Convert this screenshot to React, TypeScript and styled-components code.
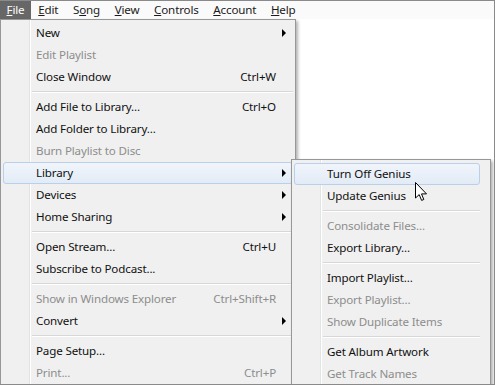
import React from 'react';
import styled, { createGlobalStyle, css } from 'styled-components';

type Entry =
  | { sep: true }
  | {
      sep?: false;
      label: string;
      shortcut?: string;
      arrow?: boolean;
      disabled?: boolean;
      active?: boolean;
      sub?: Entry[];
    };

const SEP: Entry = { sep: true };

const libraryMenu: Entry[] = [
  { label: 'Turn Off Genius', active: true },
  { label: 'Update Genius' },
  SEP,
  { label: 'Consolidate Files...', disabled: true },
  { label: 'Export Library...' },
  SEP,
  { label: 'Import Playlist...' },
  { label: 'Export Playlist...', disabled: true },
  { label: 'Show Duplicate Items', disabled: true },
  SEP,
  { label: 'Get Album Artwork' },
  { label: 'Get Track Names', disabled: true },
];

const fileMenu: Entry[] = [
  { label: 'New', arrow: true },
  { label: 'Edit Playlist', disabled: true },
  { label: 'Close Window', shortcut: 'Ctrl+W' },
  SEP,
  { label: 'Add File to Library...', shortcut: 'Ctrl+O' },
  { label: 'Add Folder to Library...' },
  { label: 'Burn Playlist to Disc', disabled: true },
  { label: 'Library', arrow: true, active: true, sub: libraryMenu },
  { label: 'Devices', arrow: true },
  { label: 'Home Sharing', arrow: true },
  SEP,
  { label: 'Open Stream...', shortcut: 'Ctrl+U' },
  { label: 'Subscribe to Podcast...' },
  SEP,
  { label: 'Show in Windows Explorer', shortcut: 'Ctrl+Shift+R', disabled: true },
  { label: 'Convert', arrow: true },
  SEP,
  { label: 'Page Setup...' },
  { label: 'Print...', shortcut: 'Ctrl+P', disabled: true },
];

// menubar titles, index of the underlined letter
const titles: [string, number][] = [
  ['File', 0],
  ['Edit', 0],
  ['Song', 1],
  ['View', 0],
  ['Controls', 0],
  ['Account', 0],
  ['Help', 0],
];

const GlobalStyle = createGlobalStyle`
  html, body {
    margin: 0;
    padding: 0;
    background: #fff;
  }
  body {
    font-family: "Segoe UI", "Noto Sans", "Open Sans", sans-serif;
    font-size: 11.6px;
    letter-spacing: -0.15px;
    color: #111;
  }
`;

const Frame = styled.div`
  position: relative;
  width: 495px;
  height: 385px;
  box-sizing: border-box;
  border: 1px solid #8a8a8a;
  border-left: 0;
  background: #fff;
  overflow: hidden;
`;

const MenuBar = styled.div`
  display: flex;
  height: 18px;
  align-items: stretch;
  background: #fafafa;
`;

const BarItem = styled.div<{ $open?: boolean }>`
  position: relative;
  display: flex;
  align-items: center;
  padding: 0 7.3px;
  line-height: 18px;
  color: #1a1a1a;
  ${(p) =>
    p.$open &&
    css`
      padding: 0 6.5px;
      background: #676767;
      color: #fff;
    `}
`;

const Menu = styled.div<{ $sub?: boolean }>`
  position: absolute;
  z-index: 2;
  box-sizing: border-box;
  border: 1px solid #979797;
  background-color: #f0f0f0;
  background-image: linear-gradient(
    to right,
    transparent 28px,
    #e2e3e3 28px,
    #e2e3e3 29px,
    #ffffff 29px,
    #ffffff 30px,
    transparent 30px
  );
  box-shadow: 2px 2px 3px rgba(0, 0, 0, 0.3);
  color: #111;
  ${(p) =>
    p.$sub
      ? css`
          top: -4px;
          left: calc(100% - 1px);
          width: 200px;
          padding: 3px 10px 3px 2px;
        `
      : css`
          top: 100%;
          left: 0;
          width: 296px;
          padding: 2px 2px 3px;
        `}
`;

const Row = styled.div<{ $disabled?: boolean; $active?: boolean }>`
  position: relative;
  display: grid;
  grid-template-columns: 1fr auto 16px;
  align-items: center;
  height: 22px;
  box-sizing: border-box;
  padding-left: 32px;
  border: 1px solid transparent;
  border-radius: 3px;
  white-space: nowrap;
  color: ${(p) => (p.$disabled ? '#8d8d8d' : '#111')};
  ${(p) =>
    p.$active &&
    css`
      border-color: #b9d0ea;
      background: linear-gradient(to bottom, #f1f5fb, #e2ebf6);
    `}
`;

const Shortcut = styled.span`
  text-align: right;
`;

const Arrow = styled.span`
  justify-self: center;
  width: 0;
  height: 0;
  border-left: 4px solid #000;
  border-top: 4px solid transparent;
  border-bottom: 4px solid transparent;
`;

const Separator = styled.div`
  height: 8px;
  margin-left: 29px;
  display: flex;
  flex-direction: column;
  justify-content: center;

  &::before {
    content: '';
    height: 1px;
    background: #d7d7d7;
  }
  &::after {
    content: '';
    height: 1px;
    background: #fff;
  }
`;

const Pointer = styled.svg`
  position: absolute;
  left: 415px;
  top: 181px;
  z-index: 5;
`;

function MenuList({ entries, sub }: { entries: Entry[]; sub?: boolean }) {
  return (
    <Menu $sub={sub}>
      {entries.map((e, i) =>
        e.sep ? (
          <Separator key={i} />
        ) : (
          <Row key={i} $disabled={e.disabled} $active={e.active}>
            <span>{e.label}</span>
            <Shortcut>{e.shortcut}</Shortcut>
            {e.arrow ? <Arrow /> : <span />}
            {e.sub && <MenuList entries={e.sub} sub />}
          </Row>
        )
      )}
    </Menu>
  );
}

export default function App() {
  return (
    <>
      <GlobalStyle />
      <Frame>
        <MenuBar>
          {titles.map(([t, u], i) => (
            <BarItem key={t} $open={i === 0}>
              {t.slice(0, u)}
              <u>{t[u]}</u>
              {t.slice(u + 1)}
              {i === 0 && <MenuList entries={fileMenu} />}
            </BarItem>
          ))}
        </MenuBar>
        <Pointer width="13" height="20" viewBox="0 0 13 20">
          <path
            d="M0.5 0.5 L0.5 16 L4.2 12.6 L6.6 18.4 L8.8 17.5 L6.5 11.9 L11.5 11.9 Z"
            fill="#fff"
            stroke="#000"
            strokeWidth="1"
            strokeLinejoin="miter"
          />
        </Pointer>
      </Frame>
    </>
  );
}
